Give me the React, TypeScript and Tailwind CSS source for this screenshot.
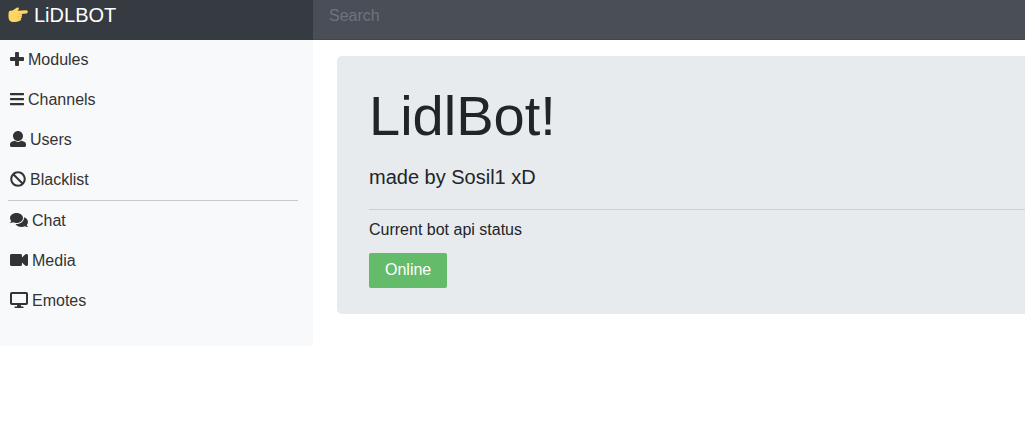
import type { ReactNode } from "react";
import { FaBan, FaBars, FaComments } from "react-icons/fa";

const PlusIcon = () => (
  <svg viewBox="0 0 448 512" fill="currentColor" className="h-4 w-[14px]" aria-hidden="true">
    <path d="M448 294.200v-76.400c0-13.300-10.700-24-24-24H286.200V56c0-13.300-10.700-24-24-24h-76.400c-13.300 0-24 10.700-24 24v137.800H24c-13.300 0-24 10.700-24 24v76.400c0 13.300 10.700 24 24 24h137.800V456c0 13.300 10.700 24 24 24h76.400c13.300 0 24-10.700 24-24V318.200H424c13.300 0 24-10.700 24-24z" />
  </svg>
);

const UserIcon = () => (
  <svg viewBox="0 0 512 512" fill="currentColor" className="h-4 w-4" aria-hidden="true">
    <path d="M256 0c88.366 0 160 71.634 160 160s-71.634 160-160 160S96 248.366 96 160 167.634 0 256 0zm183.283 333.821l-71.313-17.828c-74.923 53.89-165.738 41.864-223.94 0l-71.313 17.828C29.981 344.505 0 382.903 0 426.955V464c0 26.51 21.49 48 48 48h416c26.51 0 48-21.49 48-48v-37.045c0-44.052-29.981-82.45-72.717-93.134z" />
  </svg>
);

const VideoIcon = () => (
  <svg viewBox="0 0 576 512" fill="currentColor" className="h-4 w-[18px]" aria-hidden="true">
    <path d="M528 64h-12.118a48 48 0 0 0-33.941 14.059L384 176v-64c0-26.51-21.49-48-48-48H48C21.49 64 0 85.49 0 112v288c0 26.51 21.49 48 48 48h288c26.51 0 48-21.49 48-48v-64l97.941 97.941A48 48 0 0 0 515.882 448H528c26.51 0 48-21.49 48-48V112c0-26.51-21.49-48-48-48z" />
  </svg>
);

const DesktopIcon = () => (
  <svg viewBox="0 0 18 16" fill="none" className="h-4 w-[18px]" aria-hidden="true">
    <rect x="1" y="1" width="16" height="11" rx="0.8" stroke="currentColor" strokeWidth="2" />
    <path d="M7.4 12h3.2l.4 2.4h1.900c1 0 1 1.600 0 1.600H5.100c-1 0-1-1.600 0-1.600H7z" fill="currentColor" />
  </svg>
);

const PointingHand = () => (
  <svg viewBox="0 0 20 16" className="h-4 w-5" aria-hidden="true">
    <path
      d="M1 4.300C2.500 3.500 4 3.800 5.300 3 6.800 2.100 8.300.6 9.700.5c1.200 0 1.500 1.400.7 2.200l-1 1 8.800-.5c2 0 2.200 3 .2 3.200l-4.900.5c.9.6.8 1.800 0 2.400.6.8.3 1.900-.6 2.300.4.9-.1 1.900-1 2.200-1.800.8-5.200 1.600-7.200 1.200C3 14.600 1.700 13.800 1 12.700.3 10.500.2 7 1 4.300z"
      fill="#fdd663"
    />
    <path
      d="M13.200 7H9.400M13.200 9.400H9.300M12.500 11.700H9.200"
      fill="none"
      stroke="#edb845"
      strokeWidth="0.6"
      strokeLinecap="round"
    />
  </svg>
);

const mainLinks = [
  { label: "Modules", icon: <PlusIcon /> },
  { label: "Channels", icon: <FaBars className="h-4 w-[14px]" /> },
  { label: "Users", icon: <UserIcon /> },
  { label: "Blacklist", icon: <FaBan className="h-4 w-4" /> },
];

const extraLinks = [
  { label: "Chat", icon: <FaComments className="h-4 w-[18px]" /> },
  { label: "Media", icon: <VideoIcon /> },
  { label: "Emotes", icon: <DesktopIcon /> },
];

const NavList = ({ links }: { links: Array<{ label: string; icon: ReactNode }> }) => (
  <ul>
    {links.map(({ label, icon }) => (
      <li key={label}>
        <a href="#" className="flex h-10 items-center gap-1 px-[10px] text-[#333333] hover:text-black">
          <span className="pb-0.5">{icon}</span>
          <span>{label}</span>
        </a>
      </li>
    ))}
  </ul>
);

const App = () => {
  return (
    <div className="overflow-x-hidden bg-white font-['Liberation_Sans',Arial,sans-serif] text-base text-[#212529]">
      <header className="flex h-10 items-start bg-[#4a4e57] shadow-[inset_0_-1px_0_rgba(0,0,0,0.1)]">
        <a href="#" className="flex h-10 w-[313px] shrink-0 items-start gap-1.5 bg-[#363a41] px-2 text-xl leading-[30px] text-white">
          <span className="flex h-[30px] items-center">
            <PointingHand />
          </span>
          LiDLBOT
        </a>
        <input
          type="text"
          placeholder="Search"
          aria-label="Search"
          className="h-8 min-w-0 flex-1 bg-transparent px-4 text-white outline-none placeholder:text-[#6c757d]"
        />
      </header>

      <div className="flex items-start">
        {/* Sidebar */}
        <nav className="w-[313px] shrink-0 bg-[#f8f9fb] pb-[25px]">
          <NavList links={mainLinks} />
          <hr className="ml-2 mr-[15px] border-[#c6c8ca]" />
          <NavList links={extraLinks} />
        </nav>

        {/* Status */}
        <main className="min-w-0 flex-1 pl-6 pt-4">
          <section className="rounded-l-[5px] bg-[#e7ebee] pb-[26px] pl-8 pt-8">
            <h1 className="mb-[18px] text-[56px] leading-[56px]">LidlBot!</h1>
            <p className="text-xl leading-[30px]">made by Sosil1 xD</p>
            <hr className="mb-2 mt-[17px] border-[#cbcfd2]" />
            <p className="mb-[11px]">Current bot api status</p>
            <button type="button" className="block h-[35px] rounded-xs bg-[#64bb6a] px-4 pb-0.5 text-white">
              Online
            </button>
          </section>
        </main>
      </div>
    </div>
  );
};

export default App;
